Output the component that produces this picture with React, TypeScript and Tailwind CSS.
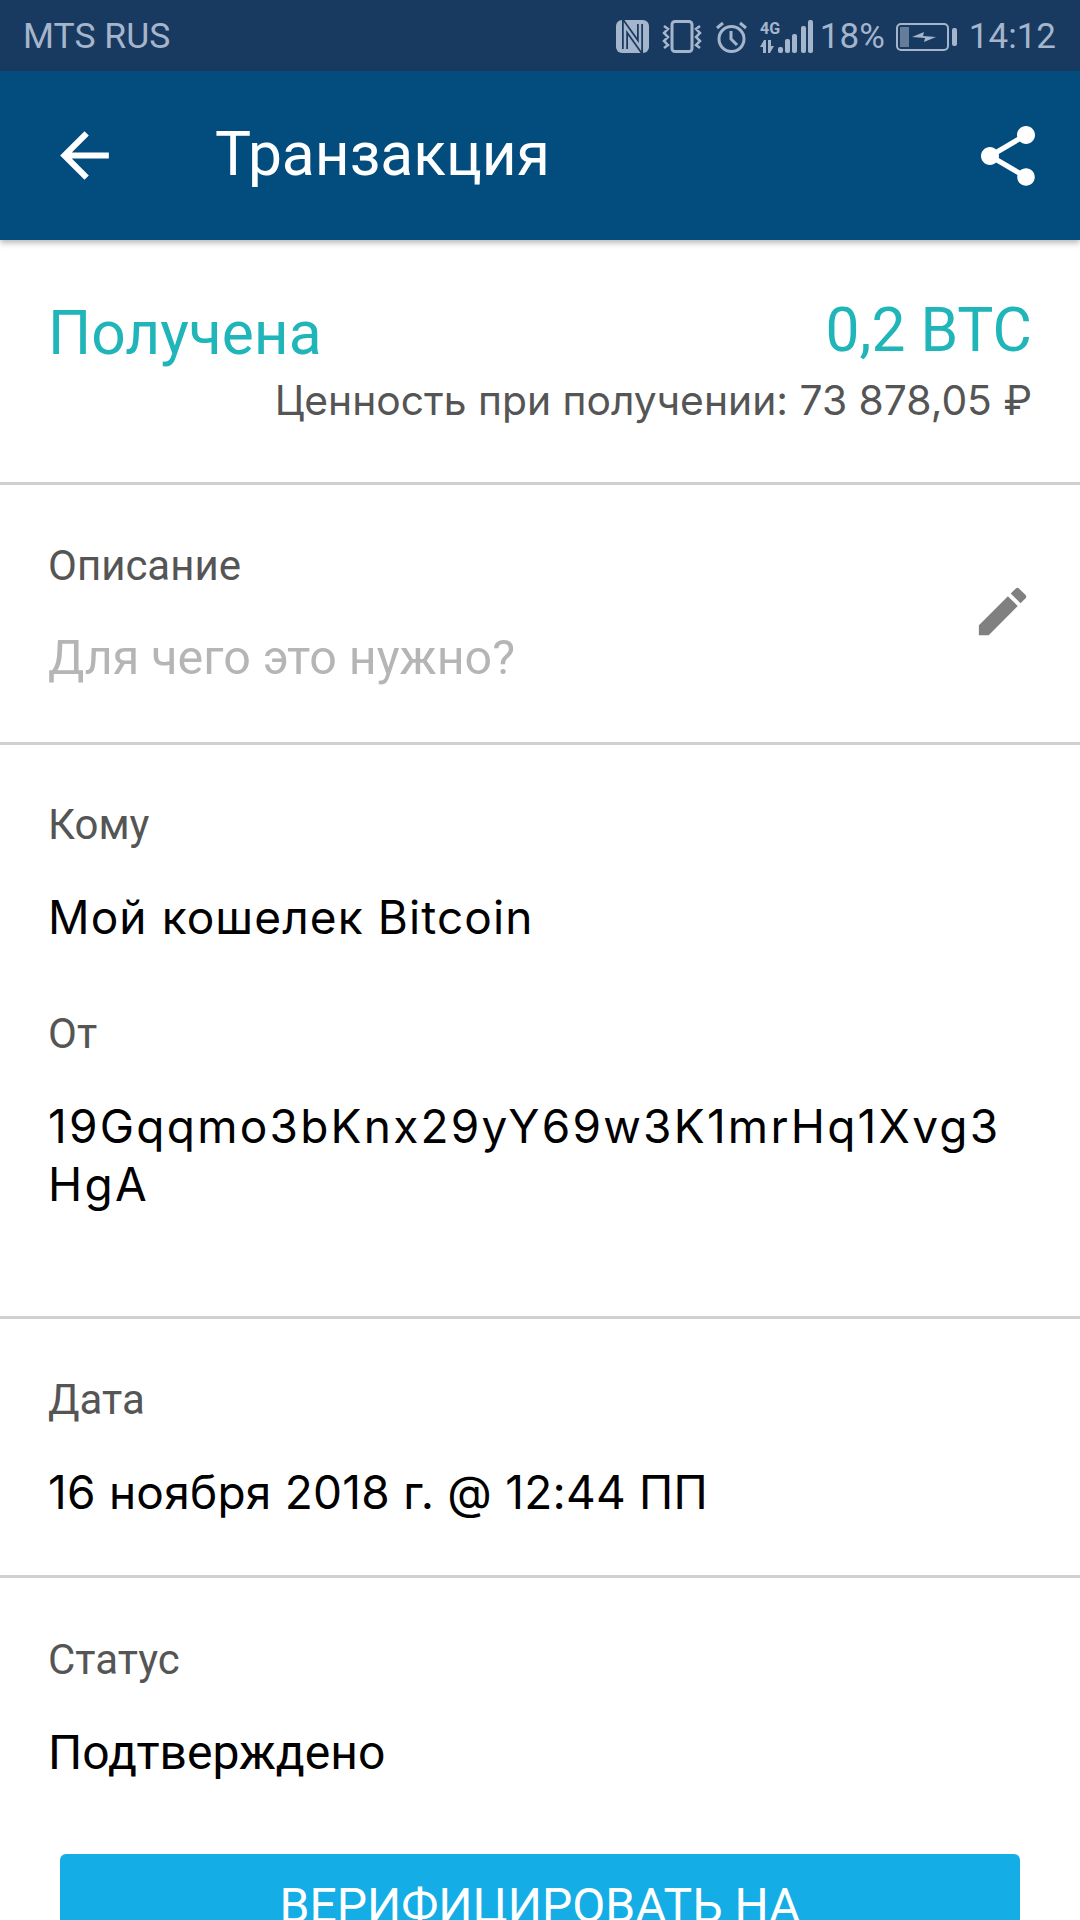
import type { ReactNode } from "react";
import { MdArrowBack, MdEdit, MdShare } from "react-icons/md";

const roboto = "font-['Roboto',sans-serif]";
const wide = "font-['Inter','Noto_Sans',sans-serif]";

const Label = ({ children }: { children: string }) => (
  <p className={`${roboto} text-[42px] leading-[44px] text-[#555555]`}>{children}</p>
);

const Value = ({ children, className }: { children: ReactNode; className: string }) => (
  <p className={`${wide} mt-[41px] text-[46px] leading-[58px] text-black ${className}`}>{children}</p>
);

const StatusIcons = () => (
  <div className="flex items-center text-[#a5b5cc]">
    {/* nfc */}
    <svg width="33" height="33" viewBox="0 0 33 33" className="mr-[12px]">
      <rect width="33" height="33" rx="6" fill="currentColor" />
      <path d="M9 29V6l15 21V4" fill="none" stroke="#183a61" strokeWidth="6" />
      <path d="M9 29V6l15 21V4" fill="none" stroke="currentColor" strokeWidth="2.5" />
    </svg>
    {/* vibrate */}
    <svg width="42" height="33" viewBox="0 0 42 33" className="mr-[12px]" fill="none" stroke="currentColor">
      <rect x="11" y="1.5" width="20" height="30" rx="3" strokeWidth="3" />
      <path d="M3 6l4 3-4 4 4 4-4 4 4 4-4 3M39 6l-4 3 4 4-4 4 4 4-4 4 4 3" strokeWidth="2.5" />
    </svg>
    {/* alarm */}
    <svg width="33" height="33" viewBox="0 0 33 33" className="mr-[12px]" fill="none" stroke="currentColor" strokeWidth="3">
      <circle cx="16.5" cy="19" r="12.5" />
      <path d="M16 11v8l6 6M2 8l6-5M31 8l-6-5" />
    </svg>
    {/* signal */}
    <svg width="54" height="34" viewBox="0 0 54 34" className="mr-[6px]" fill="currentColor">
      <text x="0" y="14" fontSize="16" fontWeight="700" fontFamily="Roboto">4G</text>
      <path d="M0 27l4-7 2 0 0 13-3 0 0-6zM8 20l3 0 0 6 3 0-4 7-2 0z" />
      <rect x="18" y="27" width="5" height="6" rx="2" />
      <rect x="25" y="19" width="5" height="14" rx="2" />
      <rect x="32" y="14" width="5" height="19" rx="2" />
      <rect x="41" y="6" width="5" height="27" rx="2" />
      <rect x="48" y="0" width="5" height="33" rx="2" />
    </svg>
    <span className={`${roboto} text-[35px] leading-none mr-[11px]`}>18%</span>
    {/* battery */}
    <svg width="61" height="28" viewBox="0 0 61 28" className="mr-[12px]">
      <rect x="1" y="1" width="51" height="26" rx="4" fill="none" stroke="currentColor" strokeWidth="2" />
      <rect x="4" y="4" width="9" height="20" fill="currentColor" opacity="0.55" />
      <path d="M16 14l12-5-1 4 13 1-12 5 1-4z" fill="currentColor" />
      <rect x="56" y="5" width="5" height="18" rx="2" fill="currentColor" />
    </svg>
    <span className={`${roboto} text-[35px] leading-none`}>14:12</span>
  </div>
);

export default function App() {
  return (
    <div className="h-[1920px] w-[1080px] overflow-hidden bg-white flex flex-col">
      <div className="h-[71px] shrink-0 bg-[#183a61] flex items-center justify-between pl-[23px] pr-[24px] pt-[2px]">
        <span className={`${roboto} text-[35.5px] text-[#a5b5cc]`}>MTS RUS</span>
        <StatusIcons />
      </div>

      <header className="relative h-[169px] shrink-0 bg-[#034c7e] flex items-center pl-[48px] pr-[36px] shadow-[0_3px_6px_rgba(0,0,0,0.28)]">
        <MdArrowBack size={73} color="white" />
        <h1 className={`${roboto} ml-[94px] text-[60.5px] leading-none text-white`}>Транзакция</h1>
        <MdShare size={72} color="white" className="ml-auto" />
      </header>

      <section className="h-[245px] shrink-0 border-b-[3px] border-[#d0d0d0] pl-[48px] pr-[48px] pt-[56px]">
        <div className="flex justify-between items-start">
          <span className={`${roboto} text-[60.5px] leading-[70px] mt-[3px] text-[#1fb5b9]`}>Получена</span>
          <span className={`${roboto} text-[60.5px] leading-[70px] text-[#1fb5b9]`}>0,2 BTC</span>
        </div>
        <p className={`${wide} mt-[6px] text-right text-[40.8px] leading-[50px] text-[#555555]`}>
          Ценность при получении: 73 878,05 ₽
        </p>
      </section>

      <section className="h-[260px] shrink-0 border-b-[3px] border-[#d0d0d0] pl-[48px] pr-[49px] pt-[59px] flex justify-between">
        <div>
          <Label>Описание</Label>
          <p className={`${roboto} mt-[43px] text-[48.4px] leading-[54px] text-[#b5b5b5]`}>Для чего это нужно?</p>
        </div>
        <MdEdit size={63} color="#808080" className="mt-[36px] -mr-[3px]" />
      </section>

      <section className="h-[574px] shrink-0 border-b-[3px] border-[#d0d0d0] pl-[48px] pr-[49px] pt-[58px]">
        <Label>Кому</Label>
        <Value className="tracking-[1.1px]">Мой кошелек Bitcoin</Value>
        <div className="mt-[66px]">
          <Label>От</Label>
        </div>
        <Value className="tracking-[2.25px]">
          19Gqqmo3bKnx29yY69w3K1mrHq1Xvg3
          <br />
          HgA
        </Value>
      </section>

      <section className="h-[259px] shrink-0 border-b-[3px] border-[#d0d0d0] pl-[48px] pr-[49px] pt-[59px]">
        <Label>Дата</Label>
        <Value className="tracking-[0.25px]">16 ноября 2018 г. @ 12:44 ПП</Value>
      </section>

      <section className="pl-[48px] pr-[60px] pt-[60px]">
        <Label>Статус</Label>
        <p className={`${roboto} mt-[42px] text-[48px] leading-[58px] text-black`}>Подтверждено</p>
        <button className={`${roboto} mt-[72px] ml-[12px] w-[960px] h-[120px] rounded-[6px] bg-[#14ade6] text-white text-[48px] leading-none pt-[28px] flex justify-center items-start`}>
          ВЕРИФИЦИРОВАТЬ НА
        </button>
      </section>
    </div>
  );
}
